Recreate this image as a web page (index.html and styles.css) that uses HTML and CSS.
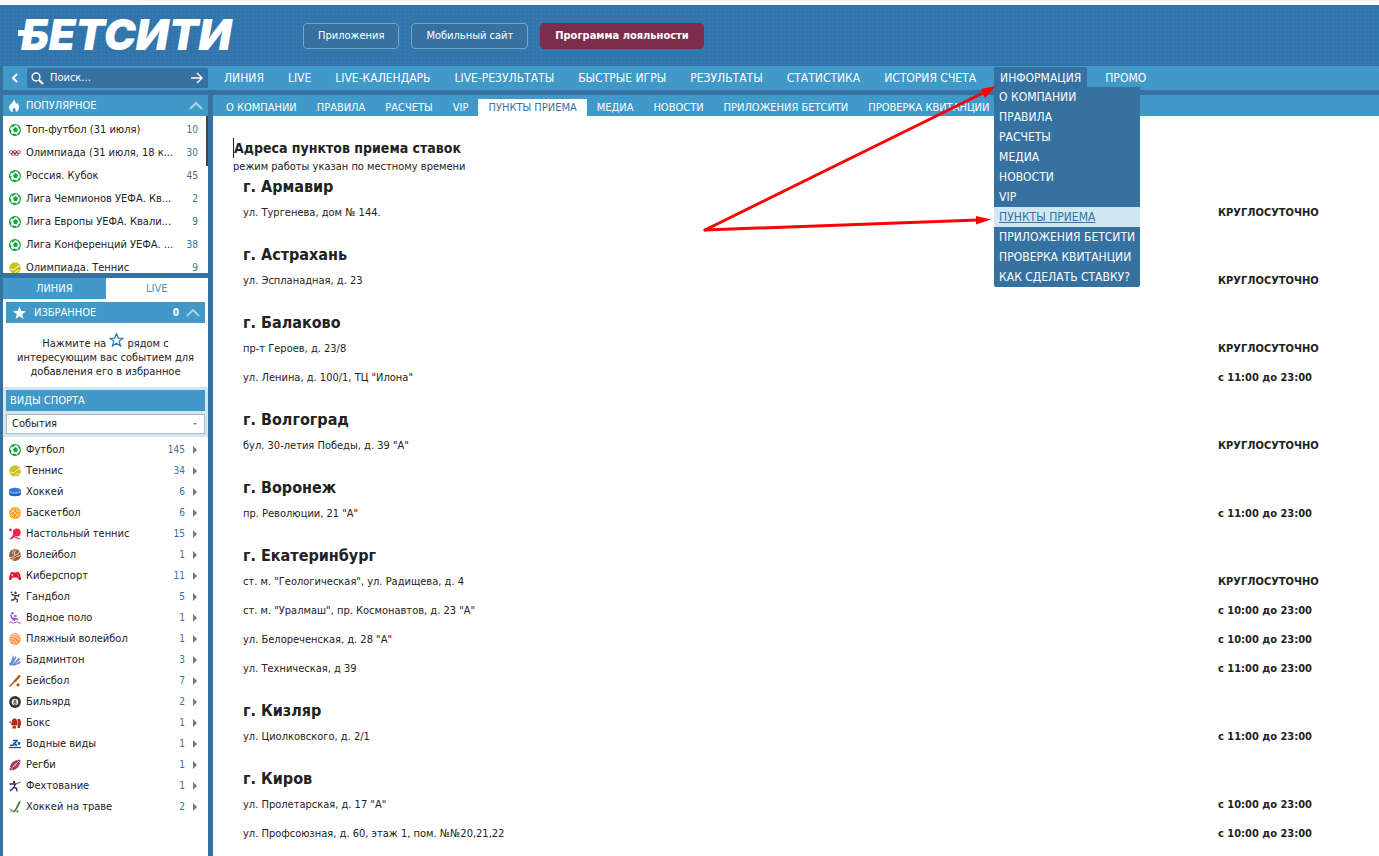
FILE: index.html
```html
<!DOCTYPE html>
<html lang="ru">
<head>
<meta charset="utf-8">
<title>БЕТСИТИ — пункты приема</title>
<link rel="stylesheet" href="styles.css">
</head>
<body>
<svg class="sprite" aria-hidden="true">
  <symbol id="football" viewBox="0 0 12 12"><circle cx="6" cy="6" r="5.400" fill="#fff" stroke="#17a53c" stroke-width="1.200"/><path d="M6.500 3 9 5 8 8H5L4 5zM2.500 1.500 6 .5 5.500 2.200 3 3.500zM.5 5 2.500 6.500 2 9 .8 8zM4 9.500l3 .3L6.500 12l-3-1zM9.300 8.500l2-1-1 3-1.300.5zM9.500 2l1.800 2.500-.8.5-1.500-2z" fill="#17a53c"/></symbol>
  <symbol id="rings" viewBox="0 0 12 12"><g fill="none" stroke="#a8324e" stroke-width=".9"><circle cx="2.300" cy="5.200" r="1.700"/><circle cx="6" cy="5.200" r="1.700"/><circle cx="9.700" cy="5.200" r="1.700"/><circle cx="4.200" cy="6.800" r="1.700"/><circle cx="7.800" cy="6.800" r="1.700"/></g></symbol>
  <symbol id="tennis" viewBox="0 0 12 12"><circle cx="6" cy="6" r="5.800" fill="#c9c41c"/><path d="M.3 6.500C3 8.500 5.500 8 7 6S10 3.500 12 4.500M6.500 12C6 10 8 8.300 9.500 8.500" fill="none" stroke="#fff" stroke-width=".9"/></symbol>
  <symbol id="puck" viewBox="0 0 12 12"><path d="M0 4.500v3.500c0 3 12 3 12 0V4.500z" fill="#1f68c8"/><ellipse cx="6" cy="4.300" rx="6" ry="2.500" fill="#2f7be0"/><path d="M0 5.300c1 2.300 11 2.300 12 0" fill="none" stroke="#fff" stroke-width=".6"/></symbol>
  <symbol id="basketball" viewBox="0 0 12 12"><circle cx="6" cy="6" r="5.900" fill="#f59a0c"/><path d="m2 2 8 8M10 2l-8 8M5.200.5C6 3 3 5.800.6 5.200M6.800 11.500C6 9 9 6.200 11.400 6.800M7 .5C7 3 9 5 11.400 5M.6 7c2.400 0 4.400 2 4.400 4.400" fill="none" stroke="#fff" stroke-width=".6"/></symbol>
  <symbol id="pingpong" viewBox="0 0 12 12"><circle cx="7.800" cy="4.500" r="3.900" fill="#e8254a"/><path d="M4 6 6.500 8.700 11 10.500 10 11.500 5.500 9.200 2 11.600.8 10.400 3.500 8z" fill="#e8254a"/><circle cx="1.500" cy="2" r="1.400" fill="#e8254a"/></symbol>
  <symbol id="volleyball" viewBox="0 0 12 12"><circle cx="6" cy="6" r="5.900" fill="#9c5c38"/><path d="M6 6C5 4 5.500 2 7.500.5M4.200 5.500C3.200 4 4 2 5 .6M6 6c2.500 0 4-1.500 4.500-3.600M7.500 7.500c2 0 3.500-.8 4.200-2M6 6c-1 2-3 3-5.300 2.500M6.500 8c-1 1.600-2.500 2.500-4.500 2.500" fill="none" stroke="#fff" stroke-width=".7"/></symbol>
  <symbol id="gamepad" viewBox="0 0 12 12"><path d="M2 2.200 4 1.800l.8.800h2.400l.8-.8 2 .4C11.400 4.500 12 7.500 12 9c0 1.500-1.600 1.500-2.300.5L8.200 7.600H3.800L2.300 9.500C1.600 10.500 0 10.500 0 9c0-1.500.6-4.500 2-6.800z" fill="#e2182f"/><path d="M2 5h2.400M3.200 3.800v2.400M8 4h1M9 6h1" stroke="#fff" stroke-width=".6"/></symbol>
  <symbol id="handball" viewBox="0 0 12 12"><circle cx="6.500" cy="1.800" r="1.200" fill="#4a3526"/><circle cx="2.500" cy="1.500" r=".9" fill="#4a3526"/><path d="M2.500 3.500 6 4.300l3.500.6L10 3M6 4.300 6 7.300l2.500 1.500-.5 2.700M6 7.300 4.500 9H2" fill="none" stroke="#4a3526" stroke-width="1.300"/></symbol>
  <symbol id="waterpolo" viewBox="0 0 12 12"><circle cx="3.500" cy="1.300" r="1.200" fill="#9a55d4"/><circle cx="6.500" cy="4" r="1.300" fill="#9a55d4"/><path d="M1.500 2.500 3 6l3 2.200M4 6l5 1.500M3.500 6.500 6 9" stroke="#9a55d4" stroke-width="1.500" fill="none"/><path d="M0 10.500q1.500-1.500 3 0t3 0 3 0 3 0" fill="none" stroke="#9a55d4"/></symbol>
  <symbol id="beachball" viewBox="0 0 12 12"><circle cx="6" cy="6" r="5.900" fill="#f49b4e"/><path d="M1 3c3-.5 7 1 10 4M.5 5.500c3-.5 6 1.500 8 5M3 1.300c3 0 6 .8 8.500 3.200M1 8c2 0 3.500 1 5 3.500" fill="none" stroke="#fff" stroke-width=".7"/></symbol>
  <symbol id="badminton" viewBox="0 0 12 12"><path d="M.5 11.500 2 8 4 .8l1.200 5zM2 10 6.500 2l1 1.500L4 9.500zM3 11l7-7.500 1 2L5 11zM3.500 11.700 11 7l.8 2L5 11.800z" fill="#638bd4"/><circle cx="2" cy="10" r="1.800" fill="#638bd4"/></symbol>
  <symbol id="baseball" viewBox="0 0 12 12"><path d="M10.500 1 5 7 1 11.200" stroke="#a85c0c" stroke-width="1.400" stroke-linecap="round" fill="none"/><path d="M10.300 1.200 6 6" stroke="#a85c0c" stroke-width="2.300" stroke-linecap="round"/><circle cx="9" cy="9.800" r="1.600" fill="#a85c0c"/></symbol>
  <symbol id="billiards" viewBox="0 0 12 12"><circle cx="6" cy="6" r="5.900" fill="#333"/><circle cx="6" cy="6" r="3.300" fill="#eee"/><circle cx="6" cy="5" r="1" fill="none" stroke="#333" stroke-width=".8"/><circle cx="6" cy="7.200" r="1.200" fill="none" stroke="#333" stroke-width=".8"/></symbol>
  <symbol id="boxing" viewBox="0 0 12 12"><path d="M3 4 4 1.500h3L8 4v4L7 9v2.500H3.500V9L2 7zM8.500 2h2.300L12 5v3l-1 1v2H8.500V9zM0 5l1.500-1v3z" fill="#b52b16"/><path d="M3 8.800h4.500" stroke="#fff" stroke-width=".6"/></symbol>
  <symbol id="swimming" viewBox="0 0 12 12"><circle cx="10" cy="5.500" r="1.400" fill="#1b55a8"/><path d="M4 2.500h5M8 3 5 5.500l3 2M1 7.500l6-1" fill="none" stroke="#1b55a8" stroke-width="1.600"/><path d="M0 9.500h12" stroke="#1b55a8" stroke-width="1.300"/></symbol>
  <symbol id="rugby" viewBox="0 0 12 12"><path d="M.7 11.300C0 6 4 .2 11.300.7 12 6 8 12 .7 11.300z" fill="#a43a55"/><path d="m3.500 8.500 5-5M4 6.500 5.500 8M5.300 5.200l1.500 1.500M6.500 4 8 5.500M1 8l3 3M8 1l3 3" stroke="#fff" stroke-width=".6"/></symbol>
  <symbol id="fencing" viewBox="0 0 12 12"><circle cx="5" cy="2" r="1.200" fill="#25265e"/><path d="M.5 4h6L5 7.300l2.500 1 .5 3M5 7.300 1 11" fill="none" stroke="#25265e" stroke-width="1.300"/><path d="M6 4.500 11.700 2" stroke="#25265e" stroke-width=".8"/></symbol>
  <symbol id="fieldhockey" viewBox="0 0 12 12"><path d="M11 .5 6.800 8.500c-.8 2-2.300 2.500-3.500 1" fill="none" stroke="#467a36" stroke-width="1.700"/><path d="M.3 7l3 1.500L5 11.300H1.500z" fill="#a3bd9a"/><circle cx="8.500" cy="10.600" r="1.100" fill="#467a36"/></symbol>
  <symbol id="chevron-up" viewBox="0 0 14 9"><path d="m1 8 6-6 6 6" fill="none" stroke="#a5d3e8" stroke-width="2"/></symbol>
  <symbol id="star" viewBox="0 0 14 14"><path d="m7 .5 1.700 4.600 4.800.2-3.800 3 1.300 4.700L7 10.300 3 13l1.300-4.700-3.800-3 4.800-.2z"/></symbol>
</svg>

<div class="window-edge"><span></span></div>
<header class="banner">
  <a class="logo" href="#"><span>БЕТСИТИ</span></a>
  <div class="promo">
    <button class="button">Приложения</button>
    <button class="button">Мобильный сайт</button>
    <button class="button button-loyalty">Программа лояльности</button>
  </div>
</header>

<div class="topbar">
  <div class="search">
    <button class="icon-button back" aria-label="Свернуть"><svg width="8" height="10" viewBox="0 0 8 10"><path d="M6 1 2 5l4 4" fill="none" stroke="#fff" stroke-width="2"/></svg></button>
    <form class="search-box">
      <svg width="13" height="13" viewBox="0 0 13 13"><circle cx="5" cy="5" r="4" fill="none" stroke="#fff" stroke-width="1.300"/><path d="m8 8 4 4" stroke="#fff" stroke-width="2.200"/></svg>
      <input type="text" aria-label="Поиск" placeholder="Поиск...">
      <button class="icon-button" type="button" aria-label="Найти"><svg width="14" height="12" viewBox="0 0 14 12"><path d="M1 6h11M7 1l5 5-5 5" fill="none" stroke="#fff" stroke-width="1.400"/></svg></button>
    </form>
  </div>
  <nav class="main-nav">
    <a href="#">ЛИНИЯ</a><a href="#">LIVE</a><a href="#">LIVE-КАЛЕНДАРЬ</a><a href="#">LIVE-РЕЗУЛЬТАТЫ</a><a href="#">БЫСТРЫЕ ИГРЫ</a><a href="#">РЕЗУЛЬТАТЫ</a><a href="#">СТАТИСТИКА</a><a href="#">ИСТОРИЯ СЧЕТА</a>
    <div class="dropdown">
      <a class="open" href="#">ИНФОРМАЦИЯ</a>
      <div class="menu">
        <a href="#">О КОМПАНИИ</a><a href="#">ПРАВИЛА</a><a href="#">РАСЧЕТЫ</a><a href="#">МЕДИА</a><a href="#">НОВОСТИ</a><a href="#">VIP</a><a class="hovered" href="#">ПУНКТЫ ПРИЕМА</a><a href="#">ПРИЛОЖЕНИЯ БЕТСИТИ</a><a href="#">ПРОВЕРКА КВИТАНЦИИ</a><a href="#">КАК СДЕЛАТЬ СТАВКУ?</a>
      </div>
    </div>
    <a href="#">ПРОМО</a>
  </nav>
</div>

<div class="layout">
  <aside class="sidebar">
    <section class="popular">
      <h2 class="bar"><svg width="10" height="13" viewBox="0 0 10 13"><path d="M5 0c.5 2.500 2 3 2 5 .8-.3 1-1 1-1.800 1.300 1.600 2 3.300 2 5C10 11 8 13 6.500 13 7.500 11 6 9.500 5 8.500 4 9.500 3 11 4 13 2 13 0 11 0 8.500 0 5.500 4.500 4 5 0z" fill="#fff"/></svg><span>ПОПУЛЯРНОЕ</span><svg class="chevron" width="14" height="9"><use href="#chevron-up"/></svg></h2>
      <ul class="popular-list">
        <li><svg><use href="#football"/></svg><a href="#">Топ-футбол (31 июля)</a><b>10</b></li>
        <li><svg><use href="#rings"/></svg><a href="#">Олимпиада (31 июля, 18 к...</a><b>30</b></li>
        <li><svg><use href="#football"/></svg><a href="#">Россия. Кубок</a><b>45</b></li>
        <li><svg><use href="#football"/></svg><a href="#">Лига Чемпионов УЕФА. Кв...</a><b>2</b></li>
        <li><svg><use href="#football"/></svg><a href="#">Лига Европы УЕФА. Квали...</a><b>9</b></li>
        <li><svg><use href="#football"/></svg><a href="#">Лига Конференций УЕФА. ...</a><b>38</b></li>
        <li><svg><use href="#tennis"/></svg><a href="#">Олимпиада. Теннис</a><b>9</b></li>
      </ul>
    </section>
    <section class="events">
      <div class="tabs"><button class="active">ЛИНИЯ</button><button>LIVE</button></div>
      <div class="favourites">
        <h2 class="bar"><svg width="15" height="14" fill="#fff"><use href="#star"/></svg><span>ИЗБРАННОЕ</span><b>0</b><svg class="chevron" width="14" height="9"><use href="#chevron-up"/></svg></h2>
        <p>Нажмите на <svg width="15" height="14" fill="none" stroke="#2a7ab8" stroke-width="1.300"><use href="#star"/></svg> рядом с интересующим вас событием для добавления его в избранное</p>
      </div>
      <div class="sports-head">
        <h2 class="bar"><span>ВИДЫ СПОРТА</span></h2>
        <div class="select-wrap"><select aria-label="Показывать"><option>События</option></select></div>
      </div>
      <ul class="sports">
        <li><svg><use href="#football"/></svg><a href="#">Футбол</a><b>145</b><i></i></li>
        <li><svg><use href="#tennis"/></svg><a href="#">Теннис</a><b>34</b><i></i></li>
        <li><svg><use href="#puck"/></svg><a href="#">Хоккей</a><b>6</b><i></i></li>
        <li><svg><use href="#basketball"/></svg><a href="#">Баскетбол</a><b>6</b><i></i></li>
        <li><svg><use href="#pingpong"/></svg><a href="#">Настольный теннис</a><b>15</b><i></i></li>
        <li><svg><use href="#volleyball"/></svg><a href="#">Волейбол</a><b>1</b><i></i></li>
        <li><svg><use href="#gamepad"/></svg><a href="#">Киберспорт</a><b>11</b><i></i></li>
        <li><svg><use href="#handball"/></svg><a href="#">Гандбол</a><b>5</b><i></i></li>
        <li><svg><use href="#waterpolo"/></svg><a href="#">Водное поло</a><b>1</b><i></i></li>
        <li><svg><use href="#beachball"/></svg><a href="#">Пляжный волейбол</a><b>1</b><i></i></li>
        <li><svg><use href="#badminton"/></svg><a href="#">Бадминтон</a><b>3</b><i></i></li>
        <li><svg><use href="#baseball"/></svg><a href="#">Бейсбол</a><b>7</b><i></i></li>
        <li><svg><use href="#billiards"/></svg><a href="#">Бильярд</a><b>2</b><i></i></li>
        <li><svg><use href="#boxing"/></svg><a href="#">Бокс</a><b>1</b><i></i></li>
        <li><svg><use href="#swimming"/></svg><a href="#">Водные виды</a><b>1</b><i></i></li>
        <li><svg><use href="#rugby"/></svg><a href="#">Регби</a><b>1</b><i></i></li>
        <li><svg><use href="#fencing"/></svg><a href="#">Фехтование</a><b>1</b><i></i></li>
        <li><svg><use href="#fieldhockey"/></svg><a href="#">Хоккей на траве</a><b>2</b><i></i></li>
      </ul>
    </section>
  </aside>

  <main class="content">
    <nav class="sub-nav">
      <a href="#">О КОМПАНИИ</a><a href="#">ПРАВИЛА</a><a href="#">РАСЧЕТЫ</a><a href="#">VIP</a><a class="active" href="#">ПУНКТЫ ПРИЕМА</a><a href="#">МЕДИА</a><a href="#">НОВОСТИ</a><a href="#">ПРИЛОЖЕНИЯ БЕТСИТИ</a><a href="#">ПРОВЕРКА КВИТАНЦИИ</a>
    </nav>
    <div class="page">
      <h1>Адреса пунктов приема ставок</h1>
      <p class="note">режим работы указан по местному времени</p>
      <table class="points">
        <tbody><tr><th colspan="2">г. Армавир</th></tr>
        <tr><td>ул. Тургенева, дом № 144.</td><td>КРУГЛОСУТОЧНО</td></tr></tbody>
        <tbody><tr><th colspan="2">г. Астрахань</th></tr>
        <tr><td>ул. Эспланадная, д. 23</td><td>КРУГЛОСУТОЧНО</td></tr></tbody>
        <tbody><tr><th colspan="2">г. Балаково</th></tr>
        <tr><td>пр-т Героев, д. 23/8</td><td>КРУГЛОСУТОЧНО</td></tr>
        <tr><td>ул. Ленина, д. 100/1, ТЦ "Илона"</td><td>с 11:00 до 23:00</td></tr></tbody>
        <tbody><tr><th colspan="2">г. Волгоград</th></tr>
        <tr><td>бул. 30-летия Победы, д. 39 "А"</td><td>КРУГЛОСУТОЧНО</td></tr></tbody>
        <tbody><tr><th colspan="2">г. Воронеж</th></tr>
        <tr><td>пр. Революции, 21 "А"</td><td>с 11:00 до 23:00</td></tr></tbody>
        <tbody><tr><th colspan="2">г. Екатеринбург</th></tr>
        <tr><td>ст. м. "Геологическая", ул. Радищева, д. 4</td><td>КРУГЛОСУТОЧНО</td></tr>
        <tr><td>ст. м. "Уралмаш", пр. Космонавтов, д. 23 "А"</td><td>с 10:00 до 23:00</td></tr>
        <tr><td>ул. Белореченская, д. 28 "А"</td><td>с 10:00 до 23:00</td></tr>
        <tr><td>ул. Техническая, д 39</td><td>с 11:00 до 23:00</td></tr></tbody>
        <tbody><tr><th colspan="2">г. Кизляр</th></tr>
        <tr><td>ул. Циолковского, д. 2/1</td><td>с 11:00 до 23:00</td></tr></tbody>
        <tbody><tr><th colspan="2">г. Киров</th></tr>
        <tr><td>ул. Пролетарская, д. 17 "А"</td><td>с 10:00 до 23:00</td></tr>
        <tr><td>ул. Профсоюзная, д. 60, этаж 1, пом. №№20,21,22</td><td>с 10:00 до 23:00</td></tr></tbody>
      </table>
    </div>
  </main>
</div>

<svg class="arrows" width="1100" height="300" viewBox="0 0 1100 300" aria-hidden="true">
  <g stroke="#fe0000" stroke-width="3" stroke-linecap="round"><path d="M705 230 985 92"/><path d="M705 230 978 220"/></g>
  <path d="M996 86 985 98 981 89zM991 219.500 976 224.500 976 216z" fill="#fe0000"/>
</svg>
</body>
</html>
```
FILE: styles.css
```css
* { box-sizing: border-box; }
body {
  margin: 0;
  min-height: 100vh;
  display: flex;
  flex-direction: column;
  background: #3571a1;
  color: #222;
  font: 11px/14px "DejaVu Sans Condensed", "DejaVu Sans", sans-serif;
}
a { color: inherit; text-decoration: none; }
button, input, select { font: inherit; color: inherit; }
h1, h2, p, ul { margin: 0; padding: 0; }
ul { list-style: none; }
.sprite { position: absolute; width: 0; height: 0; }

.window-edge { height: 5px; padding-left: 138px; background: #fff; }
.window-edge span { display: block; height: 1px; background: #f0f0f0; }

.banner {
  height: 61px;
  padding: 0 18px;
  display: flex;
  align-items: center;
  gap: 64px;
  border-top: 1px solid #3571a1;
  background:
    linear-gradient(#2e7bb6 1px, transparent 1px) 0 0 / 4px 4px,
    linear-gradient(90deg, #2e7bb6 1px, transparent 1px) 0 0 / 4px 4px,
    #3572a6;
}
.logo {
  position: relative;
  width: 221px;
  padding-left: 3px;
  color: #fff;
  font: italic 900 43px/44px Inter, sans-serif;
  white-space: nowrap;
}
.logo span { display: block; margin-top: -4px; }
.logo::before {
  content: "";
  position: absolute;
  left: 0;
  top: 14px;
  width: 12px;
  height: 6px;
  background: #fff;
}
.promo { display: flex; gap: 12px; }
.button {
  height: 26px;
  padding: 0 14px;
  border: 1px solid #72a7d0;
  border-radius: 4px;
  background: #3571a1;
  color: #fff;
}
.button-loyalty { border-color: #7c2d4c; background: #7c2d4c; font-weight: bold; }

.topbar { display: flex; height: 24px; margin-left: 3px; background: #4099c8; color: #fff; }
.search { width: 205px; display: flex; align-items: center; }
.icon-button { padding: 0; border: 0; background: none; display: flex; }
.back { width: 24px; justify-content: center; }
.search-box {
  flex: 1;
  min-width: 0;
  height: 20px;
  padding: 0 4px;
  display: flex;
  align-items: center;
  gap: 6px;
  border-radius: 2px;
  background: #3571a1;
}
.search-box input { flex: 1; min-width: 0; padding: 0; border: 0; outline: 0; background: none; }
.search-box input::placeholder { color: #fff; opacity: 1; }
.main-nav {
  display: flex;
  align-items: center;
  gap: 12px;
  padding-left: 10px;
  font-size: 12px;
  line-height: 22px;
  white-space: nowrap;
}
.main-nav > a, .open { display: block; padding: 0 6px; }
.dropdown { position: relative; }
.open { background: #3571a1; border-radius: 2px 2px 0 0; }
.menu {
  position: absolute;
  z-index: 2;
  top: 20px;
  left: 0;
  background: #3571a1;
  border-radius: 0 0 2px 2px;
  line-height: 20px;
}
.menu a { display: block; padding: 0 5px; }
.menu .hovered { background: #cfe8f4; color: #3571a1; text-decoration: underline; }

.layout { flex: 1; display: flex; gap: 5px; padding: 5px 0 0 3px; }
.sidebar { width: 205px; flex: none; display: flex; flex-direction: column; gap: 5px; }
.bar {
  height: 21px;
  display: flex;
  align-items: center;
  gap: 7px;
  padding: 0 5px 0 6px;
  background: #4099c8;
  color: #fff;
  font-size: 11px;
  font-weight: normal;
}
.bar span { flex: 1; }
.popular { background: #fff; }
.popular-list {
  height: 157px;
  overflow: hidden;
  padding-top: 2px;
  background: linear-gradient(#444, #444) right top / 2px 50px no-repeat;
}
.popular-list li, .sports li {
  display: flex;
  align-items: center;
  height: 23px;
  padding: 0 10px 0 6px;
  white-space: nowrap;
}
li svg { width: 12px; height: 12px; margin-right: 5px; flex: none; }
li a { flex: 1; }
li b { color: #3571a1; font-size: 10px; font-weight: normal; }
.events { flex: 1; background: #fff; }
.tabs { display: flex; height: 21px; }
.tabs button { flex: 1; padding: 0; border: 0; background: #fff; color: #4099c8; }
.tabs .active { background: #4099c8; color: #fff; }
.favourites { padding: 3px 3px 8px; text-align: center; }
.favourites .bar { text-align: left; }
.favourites .bar b { font-size: 10px; }
.favourites p { padding: 10px 8px 0; }
.sports-head { display: grid; gap: 3px; padding: 3px; background: #cfe8f4; }
.sports-head .bar { padding-left: 4px; }
.select-wrap { position: relative; display: flex; }
.select-wrap::after {
  content: "";
  position: absolute;
  right: 8px;
  top: 9px;
  border: 2px solid transparent;
  border-top-color: #777;
  border-bottom: 0;
}
.select-wrap select {
  appearance: none;
  width: 100%;
  height: 20px;
  padding: 0 5px;
  border: 1px solid #b5b5b5;
  border-radius: 0;
  background: #fff;
}
.sports { padding-top: 2px; }
.sports li { height: 21px; }
.sports i { margin: 0 1px 0 8px; border: 4px solid transparent; border-left-color: #777; border-right: 0; }

.content { flex: 1; min-width: 0; background: #fff; }
.sub-nav {
  height: 21px;
  padding: 4px 0 0 3px;
  display: flex;
  background: #4099c8;
  color: #fff;
  line-height: 17px;
  white-space: nowrap;
}
.sub-nav a { padding: 0 10px; }
.sub-nav .active { background: #fff; color: #3571a1; }
.page { padding: 22px 20px 8px; }
h1 { border-left: 1px solid #222; font-size: 14px; line-height: 20px; }
.note { line-height: 18px; }
.points { width: 100%; border-collapse: collapse; }
.points th { height: 39px; padding: 17px 10px 0; font-size: 16px; line-height: 22px; text-align: left; }
.points tbody:first-child th { height: 22px; padding-top: 0; }
.points td { height: 29px; padding: 0 10px; }
.points td:last-child {
  width: 141px;
  padding: 0;
  font-weight: bold;
  white-space: nowrap;
}
.arrows { position: absolute; z-index: 3; left: 0; top: 0; pointer-events: none; }
```
